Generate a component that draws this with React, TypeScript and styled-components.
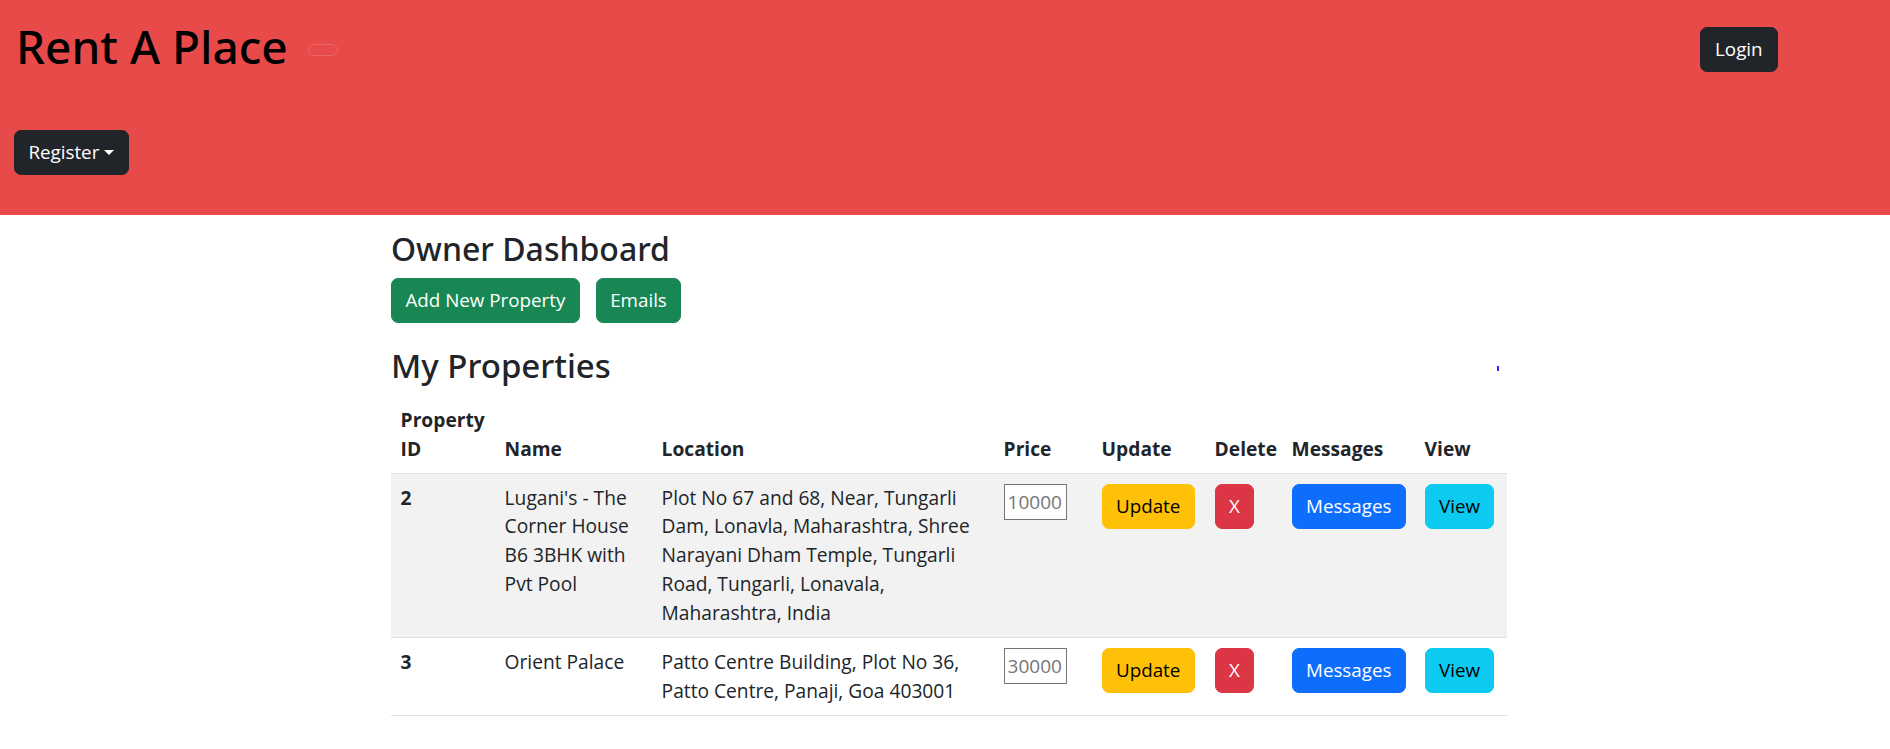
import { styled, createGlobalStyle } from 'styled-components';

type Property = {
  id: number;
  name: string;
  location: string;
  price: string;
};

const properties: Property[] = [
  {
    id: 2,
    name: "Lugani's - The Corner House B6 3BHK with Pvt Pool",
    location:
      'Plot No 67 and 68, Near, Tungarli Dam, Lonavla, Maharashtra, Shree Narayani Dham Temple, Tungarli Road, Tungarli, Lonavala, Maharashtra, India',
    price: '10000',
  },
  {
    id: 3,
    name: 'Orient Palace',
    location: 'Patto Centre Building, Plot No 36, Patto Centre, Panaji, Goa 403001',
    price: '30000',
  },
];

const GlobalStyle = createGlobalStyle`
  * {
    box-sizing: border-box;
  }
  body {
    margin: 0;
    background: #fff;
    color: #212529;
    font-family: 'Open Sans', 'Noto Sans', sans-serif;
    font-size: 19.2px;
    line-height: 1.5;
  }
`;

export default function App() {
  return (
    <>
      <GlobalStyle />
      <Header>
        <TopRow>
          <Brand>Rent A Place</Brand>
          <Toggler />
          <LoginButton>Login</LoginButton>
        </TopRow>
        <DarkButton>
          Register
          <Caret />
        </DarkButton>
      </Header>

      <Main>
        <Title>Owner Dashboard</Title>
        <Actions>
          <Button $variant="success">Add New Property</Button>
          <Button $variant="success">Emails</Button>
        </Actions>

        <SectionRow>
          <SectionTitle>My Properties</SectionTitle>
          <Marker />
        </SectionRow>

        <Table>
          <colgroup>
            <col style={{ width: 104 }} />
            <col style={{ width: 157 }} />
            <col style={{ width: 342 }} />
            <col style={{ width: 98 }} />
            <col style={{ width: 113 }} />
            <col style={{ width: 77 }} />
            <col style={{ width: 133 }} />
            <col style={{ width: 92 }} />
          </colgroup>
          <thead>
            <tr>
              <Th>Property ID</Th>
              <Th>Name</Th>
              <Th>Location</Th>
              <Th>Price</Th>
              <Th>Update</Th>
              <Th>Delete</Th>
              <Th>Messages</Th>
              <Th>View</Th>
            </tr>
          </thead>
          <tbody>
            {properties.map((p, i) => (
              <Row key={p.id} $striped={i % 2 === 0}>
                <RowHead scope="row">{p.id}</RowHead>
                <Td>{p.name}</Td>
                <Td>{p.location}</Td>
                <Td>
                  <PriceInput placeholder={p.price} />
                </Td>
                <Td>
                  <Button $variant="warning">Update</Button>
                </Td>
                <Td>
                  <Button $variant="danger">X</Button>
                </Td>
                <Td>
                  <Button $variant="primary">Messages</Button>
                </Td>
                <Td>
                  <Button $variant="info">View</Button>
                </Td>
              </Row>
            ))}
          </tbody>
        </Table>
      </Main>
    </>
  );
}

const variants = {
  success: { bg: '#198754', color: '#fff' },
  warning: { bg: '#ffc107', color: '#000' },
  danger: { bg: '#dc3545', color: '#fff' },
  primary: { bg: '#0d6efd', color: '#fff' },
  info: { bg: '#0dcaf0', color: '#000' },
  dark: { bg: '#212529', color: '#fff' },
};

const Header = styled.header`
  display: flex;
  flex-direction: column;
  align-items: flex-start;
  height: 215px;
  padding: 18px 0 0 14px;
  background: #e84a4a;
`;

const TopRow = styled.div`
  display: flex;
  align-items: flex-start;
  align-self: stretch;
  margin-bottom: 55px;
`;

const Brand = styled.h1`
  margin: 0 0 0 2px;
  font-family: 'Noto Sans', 'Open Sans', sans-serif;
  font-size: 46px;
  font-weight: 500;
  line-height: 57px;
  color: #000;
`;

const Toggler = styled.span`
  width: 30px;
  height: 12px;
  margin: 26px 0 0 20px;
  border: 1px solid rgba(255, 255, 255, 0.15);
  border-radius: 6px;
`;

const Button = styled.button<{ $variant: keyof typeof variants }>`
  display: inline-flex;
  align-items: center;
  padding: 7.2px 13.4px;
  border: 1px solid ${({ $variant }) => variants[$variant].bg};
  border-radius: 7px;
  background: ${({ $variant }) => variants[$variant].bg};
  color: ${({ $variant }) => variants[$variant].color};
  font-family: inherit;
  font-size: 18.8px;
  line-height: 28.8px;
  cursor: pointer;
`;

const DarkButton = styled(Button).attrs({ $variant: 'dark' as const })``;

const LoginButton = styled(DarkButton)`
  margin: 9px 112px 0 auto;
  padding: 7.2px 14.4px;
`;

const Caret = styled.span`
  margin-left: 5px;
  border-top: 5.8px solid #fff;
  border-left: 5.8px solid transparent;
  border-right: 5.8px solid transparent;
`;

const Main = styled.main`
  width: 1116px;
  margin: 13px 0 0 391px;
`;

const Title = styled.h3`
  margin: 0 0 9px;
  font-family: 'Noto Sans', 'Open Sans', sans-serif;
  font-size: 32px;
  font-weight: 500;
  line-height: 41px;
`;

const Actions = styled.div`
  display: flex;
  gap: 16px;
`;

const SectionRow = styled.div`
  display: flex;
  align-items: center;
  justify-content: space-between;
  margin: 21px 0 9px;
`;

const SectionTitle = styled.h2`
  margin: 0;
  font-family: 'Noto Sans', 'Open Sans', sans-serif;
  font-size: 33px;
  font-weight: 500;
  line-height: 43px;
`;

const Marker = styled.span`
  width: 2px;
  height: 5px;
  margin: 6px 8px 0 0;
  background: #2a2aff;
`;

const Table = styled.table`
  width: 100%;
  table-layout: fixed;
  border-collapse: collapse;
`;

const Th = styled.th`
  padding: 9.6px;
  text-align: left;
  vertical-align: bottom;
  font-weight: 700;
  border-bottom: 1px solid #dee2e6;
`;

const Row = styled.tr<{ $striped: boolean }>`
  background: ${({ $striped }) => ($striped ? '#f2f2f2' : '#fff')};
  border-bottom: 1px solid #dee2e6;
`;

const RowHead = styled.th`
  padding: 9.6px;
  text-align: left;
  vertical-align: top;
  font-weight: 700;
`;

const Td = styled.td`
  padding: 9.6px;
  vertical-align: top;
`;

const PriceInput = styled.input`
  display: block;
  width: 63px;
  height: 36px;
  padding: 2px 3px;
  border: 1px solid #767676;
  border-radius: 0;
  background: #fff;
  font-family: inherit;
  font-size: 19px;

  &::placeholder {
    color: #757575;
  }
`;
